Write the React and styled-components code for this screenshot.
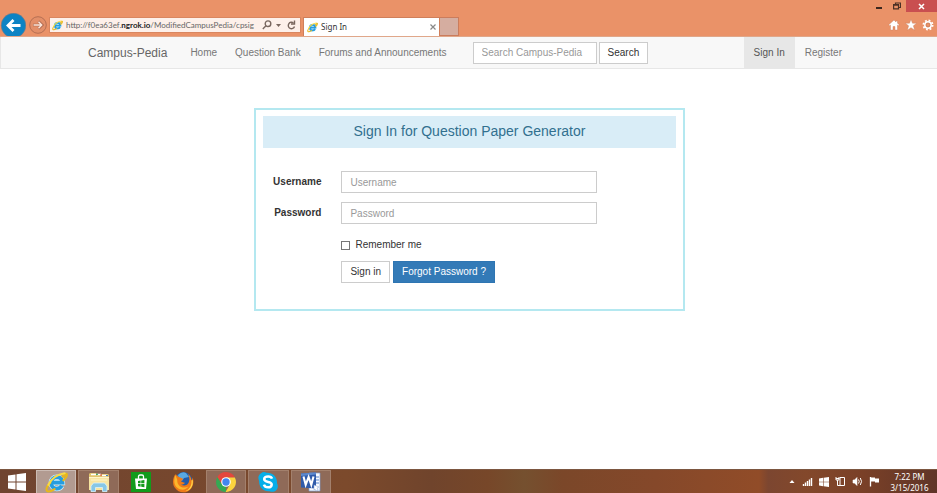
import React from "react";
import styled, { createGlobalStyle } from "styled-components";

const GlobalStyle = createGlobalStyle`
  * { box-sizing: border-box; }
  body { margin: 0; background: #fff; }
  button, input { font: inherit; margin: 0; }
`;

const Desktop = styled.div`
  min-height: 100vh;
  display: flex;
  flex-direction: column;
  color: #333;
  font: 10px/14px "Liberation Sans", Arial, sans-serif;
`;

/* Browser frame */
const BrowserBar = styled.header`
  height: 37px;
  display: flex;
  align-items: flex-end;
  background: #ea9268;
  border-bottom: 1px solid #e0a78a;
  font: 8px/12px "Noto Sans", "Open Sans", sans-serif;
`;
const IconButton = styled.button`
  display: flex;
  align-items: center;
  justify-content: center;
  flex: none;
  padding: 0;
  border: 0;
  background: none;
  svg { display: block; }
`;
const Forward = styled(IconButton)`
  margin: 0 0 2px 3px;
`;
const Address = styled.div`
  width: 252px;
  height: 16px;
  margin: 0 2px 3px 2px;
  padding: 0 4px 0 2px;
  display: flex;
  align-items: center;
  gap: 3px;
  background: #fdf0ea;
  border: 1px solid #d98660;
`;
const AddressActions = styled.div`
  display: flex;
  align-items: center;
  gap: 6px;
  padding-left: 1px;
`;
const Url = styled.span`
  flex: 1;
  white-space: nowrap;
  font-family: Lato, "Noto Sans", sans-serif;
  color: #666;
  b { font-weight: 700; color: #222; }
`;
const Tab = styled.div`
  width: 137px;
  height: 19px;
  padding: 0 3px;
  display: flex;
  align-items: center;
  gap: 3px;
  color: #333;
  background: #fff;
  border: 1px solid #cf7f5b;
  border-bottom: 0;
`;
const TabTitle = styled.span`
  flex: 1;
`;
const NewTab = styled.button`
  width: 19px;
  height: 19px;
  padding: 0;
  background: #d5ada0;
  border: 1px solid #cb7c5c;
  border-left: 0;
`;
const WindowSide = styled.div`
  align-self: stretch;
  margin-left: auto;
  display: flex;
  flex-direction: column;
  align-items: flex-end;
`;
const WindowControls = styled.div`
  display: flex;
  height: 12px;
`;
const WindowButton = styled(IconButton)`
  width: ${(p) => (p.$close ? 31 : 18)}px;
  background: ${(p) => (p.$close ? "#c94f50" : "none")};
`;
const BrowserTools = styled.div`
  display: flex;
  gap: 5px;
  padding: 7px 3px 0 0;
`;

/* Site navigation */
const Navbar = styled.nav`
  display: flex;
  height: 32px;
  padding: 0 85px 0 87px;
  background: #f8f8f8;
  border: 1px solid #e7e7e7;
  border-top: 0;
  border-right: 0;
  align-items: center;
`;
const Brand = styled.a`
  font-size: 12px;
  color: #666;
  text-decoration: none;
  margin-right: 14px;
`;
const NavLink = styled.a`
  display: flex;
  align-items: center;
  align-self: stretch;
  padding: 0 ${(p) => (p.$wide ? 10 : 9)}px;
  color: ${(p) => (p.$active ? "#555" : "#777")};
  background: ${(p) => (p.$active ? "#e7e7e7" : "transparent")};
  text-decoration: none;
  white-space: nowrap;
`;
const SearchForm = styled.form`
  display: flex;
  gap: 2px;
  margin: 0 auto 0 17px;
`;
const TextInput = styled.input`
  height: 22px;
  width: ${(p) => p.$width || "100%"};
  padding: 0 8px;
  color: #555;
  background: #fff;
  border: 1px solid #ccc;
  border-radius: 0;
  &::placeholder { color: #999; opacity: 1; }
`;
const Button = styled.button`
  height: 22px;
  padding: 0 8px;
  color: ${(p) => (p.$primary ? "#fff" : "#333")};
  background: ${(p) => (p.$primary ? "#337ab7" : "#fff")};
  border: 1px solid ${(p) => (p.$primary ? "#2e75b2" : "#ccc")};
  white-space: nowrap;
`;

/* Sign-in panel */
const Main = styled.main`
  flex: 1;
  padding: 39px 0 39px 2px;
`;
const Panel = styled.section`
  width: 46%;
  min-width: 400px;
  margin: 0 auto;
  padding: 6px 7px 26px;
  border: 2px solid #b4e8f0;
`;
const PanelTitle = styled.h1`
  margin: 0 0 23px;
  padding: 6px 0 8px;
  text-align: center;
  font-size: 14px;
  line-height: 18px;
  font-weight: 400;
  color: #31708f;
  background: #d9edf7;
`;
const LoginForm = styled.form`
  display: grid;
  grid-template-columns: 58px 62%;
  column-gap: 20px;
  row-gap: 9px;
  align-items: center;
`;
const FieldLabel = styled.label`
  font-weight: 700;
  text-align: right;
`;
const Remember = styled.label`
  grid-column: 2;
  display: flex;
  align-items: center;
  gap: 5px;
  padding-top: 5px;
`;
const Checkbox = styled.input`
  appearance: none;
  width: 9px;
  height: 9px;
  border: 1px solid #777;
  background: #fff;
  &:checked { background: #337ab7; }
`;
const Actions = styled.div`
  grid-column: 2;
  display: flex;
  gap: 3px;
`;

/* Taskbar */
const Taskbar = styled.footer`
  height: 24px;
  display: flex;
  align-items: stretch;
  gap: 2px;
  color: #fff;
  font: 8px/11px "Noto Sans", "Open Sans", sans-serif;
  border-top: 1px solid #7c5640;
  background: linear-gradient(
    90deg, #704430 0%, #7c4a2c 37%, #70442c 46%, #774729 52%, #75502f 56%, #7b4729 60%,
    #85482a 70%, #914c28 81%, #7c4630 82%, #83482b 86%, #7a4027 92%, #5f3528 100%
  );
`;
const StartButton = styled(IconButton)`
  width: 34px;
`;
const Tasks = styled.div`
  display: flex;
  gap: 2px;
  width: 295px;
`;
const Task = styled(IconButton)`
  flex: 1;
  min-width: 0;
  background: ${(p) => (p.$active ? "#b29b91" : p.$open ? "#8f6a58" : "transparent")};
  border: 1px solid ${(p) => (p.$active ? "#cbbbb3" : p.$open ? "#a3806c" : "transparent")};
  border-bottom: 0;
`;
const Tray = styled.div`
  margin-left: auto;
  display: flex;
  align-items: center;
  gap: 6px;
`;
const Clock = styled.time`
  width: 47px;
  margin: 0 4px 0 0;
  text-align: center;
  white-space: nowrap;
`;

const IELogo = ({ size }) => (
  <svg width={size} height={size} viewBox="0 0 24 24" fill="none" aria-hidden="true">
    <path d="M17.500 15.300a6 6 0 0 1-5.300 3.100c-3.400 0-5.700-2.500-5.700-6s2.400-6 5.900-6c3.400 0 5.600 2.200 5.800 5.700H8" stroke="#cdeefc" strokeWidth="5.400" />
    <path d="M17.500 15.300a6 6 0 0 1-5.300 3.100c-3.400 0-5.700-2.500-5.700-6s2.400-6 5.900-6c3.400 0 5.600 2.200 5.800 5.700H8" stroke="#269de0" strokeWidth="4" />
    <path d="M18.500 6C20.800 3.200 22.300 2.300 22.700 3.200c.5 1.500-1.200 4.300-3.500 6.500M5.500 12C2 16 .9 19.500 2.200 20.900c1.200 1.200 4.500 0 7.800-2.100" stroke="#e8b81a" strokeWidth="2.200" strokeLinecap="round" />
    <path d="M3.500 14.500C6.500 8.500 13 3.500 20.500 2.400" stroke="#fadb43" strokeWidth="2.200" strokeLinecap="round" />
  </svg>
);
const BackIcon = () => (
  <svg width="26" height="23" viewBox="0 0 26 23" aria-hidden="true">
    <circle cx="13.500" cy="12.500" r="12.300" fill="#0c83c4" stroke="#7b7a83" strokeWidth=".6" />
    <path d="M20.500 12.500H8M13.500 7L8 12.500l5.500 5.500" fill="none" stroke="#fff" strokeWidth="2.800" />
  </svg>
);
const ForwardIcon = () => (
  <svg width="18" height="18" viewBox="0 0 18 18" fill="none" aria-hidden="true">
    <circle cx="9" cy="9" r="8.300" stroke="#b56f53" fill="#e38f69" />
    <path d="M4 9h9M9.500 5.300L13.200 9l-3.700 3.700" stroke="#a9644a" strokeWidth="2.600" />
    <path d="M4.500 9h8M9.500 5.800L12.700 9l-3.200 3.200" stroke="#fde6da" strokeWidth="1.500" />
  </svg>
);
const SearchIcon = () => (
  <svg width="10" height="10" viewBox="0 0 10 10" fill="none" stroke="#79675f" strokeWidth="1.400" aria-hidden="true">
    <circle cx="6" cy="3.700" r="2.800" /><path d="M4 5.800L.8 9" />
  </svg>
);
const CaretIcon = () => (
  <svg width="5" height="3" viewBox="0 0 5 3" aria-hidden="true"><path d="M0 0h5L2.500 3z" fill="#79675f" /></svg>
);
const ReloadIcon = () => (
  <svg width="9" height="10" viewBox="0 0 9 10" fill="none" stroke="#79675f" strokeWidth="1.400" aria-hidden="true">
    <path d="M7.500 6.500A3.200 3.200 0 1 1 6.500 3" /><path d="M7.500.5v3.500H4" />
  </svg>
);
const TabCloseIcon = () => (
  <svg width="6" height="6" viewBox="0 0 6 6" stroke="#888" strokeWidth="1.200" aria-hidden="true"><path d="M.5.5l5 5M5.500.5l-5 5" /></svg>
);
const MinimizeIcon = () => (
  <svg width="8" height="8" viewBox="0 0 8 8" aria-hidden="true"><rect x="1" y="5" width="6" height="2" fill="#3c271e" /></svg>
);
const RestoreIcon = () => (
  <svg width="8" height="8" viewBox="0 0 8 8" fill="none" stroke="#4b3025" strokeWidth="1.200" aria-hidden="true">
    <path d="M2.500 2V1h5v4.500H6" /><path d="M.6 2.600h4.900v4.300H.6zM.6 3.200h4.900" />
  </svg>
);
const CloseIcon = () => (
  <svg width="7" height="7" viewBox="0 0 7 7" stroke="#fff" strokeWidth="1.500" aria-hidden="true"><path d="M1 1l5 5M6 1L1 6" /></svg>
);
const HomeIcon = () => (
  <svg width="12" height="12" viewBox="0 0 12 12" aria-hidden="true">
    <path d="M6 1L.8 5.700l1 1 .7-.6v4.900h2.500V7.500h2v3.500h2.500V6.100l.7.600 1-1-1.700-1.500V2H8v1z" fill="#fff" stroke="#c47c5c" strokeWidth=".4" />
  </svg>
);
const StarIcon = () => (
  <svg width="12" height="12" viewBox="0 0 12 12" aria-hidden="true">
    <path d="M6 .3l1.500 3.900h4.200L8.400 6.800l1.300 4.400L6 8.700l-3.700 2.500 1.300-4.400L.3 4.200h4.200z" fill="#fff" stroke="#c47c5c" strokeWidth=".4" />
  </svg>
);
const GearIcon = () => (
  <svg width="12" height="12" viewBox="0 0 12 12" fill="none" aria-hidden="true">
    <circle cx="6" cy="6" r="4.600" stroke="#fff" strokeWidth="1.800" strokeDasharray="1.800 1.813" />
    <circle cx="6" cy="6" r="3.100" stroke="#fff" strokeWidth="1.700" />
    <circle cx="6" cy="6" r="2.100" stroke="#a9674b" strokeWidth=".5" />
  </svg>
);
const WindowsIcon = ({ size }) => (
  <svg width={size} height={size} viewBox="0 0 18 18" fill="#fff" aria-hidden="true">
    <path d="M0 2.600L7.500 1.500v7H0zM8.500 1.300L18 0v8.500H8.500zM0 9.500h7.500v7L0 15.400zM8.500 9.500H18V18l-9.500-1.300z" />
  </svg>
);
const FolderIcon = () => (
  <svg width="24" height="22" viewBox="0 0 24 22" aria-hidden="true">
    <path d="M2 3l1-1h6l1 1h11l1 1v15H2z" fill="#e2c56d" />
    <path d="M4 3.500h5M10 3.500h4M15 4.500h5" stroke="#fff" strokeWidth="1.500" />
    <path d="M9 3.300h2" stroke="#23a45a" /><path d="M13 4h2" stroke="#d84938" /><path d="M19 4.500h2" stroke="#3e82c7" />
    <path d="M2 6h20v13H2z" fill="#f8e5a0" /><path d="M2 6.500h20M4 9h16" stroke="#fff5cb" />
    <path d="M4 20.500V15l2.500-3h11l2.500 3v5.500h-4.500v-4h-7v4z" fill="#87c7e6" stroke="#d8f3fe" strokeWidth=".8" />
  </svg>
);
const StoreIcon = () => (
  <svg width="20" height="20" viewBox="0 0 20 20" aria-hidden="true">
    <rect width="20" height="20" fill="#129b1b" />
    <path d="M7.500 7V4.500Q7.500 3 9 3h2q1.500 0 1.500 1.500V7" fill="none" stroke="#fff" strokeWidth="1.300" />
    <path d="M4 6.500h12L15 17H5z" fill="#fff" />
    <path d="M7 9l2.600-.4v2.700H7zM10.200 8.500l3.200-.4v3.200h-3.200zM7 12h2.600v2.700L7 14.300zM10.200 12h3.200v3.200l-3.200-.4z" fill="#129b1b" />
  </svg>
);
const FirefoxIcon = () => (
  <svg width="22" height="22" viewBox="0 0 22 22" aria-hidden="true">
    <circle cx="11.500" cy="10" r="9" fill="#235ba8" />
    <path d="M6 4q4-4 8-2l3 4-5 1-2 3-3-2z" fill="#58a8e1" />
    <path d="M3.500 3C.5 7 .2 13 2.700 16.500 5.500 21 11 22.500 15.500 20.500c5-2 7-8.500 5.200-14-.3 2-.8 2.500-1.200 3-.3-3-1.500-5-3.500-6.500 1.300 3 2 5.500.7 8.500-1.200 3-5 4-7.700 2 2 .2 3.300-.3 4-1.700-1.500.2-2.300-1.300-4-1.300 0-1.500 2-1.300 2-2.800L8.300 6.500C6.500 6.200 5.300 5 4.900 3.500L4 5z" fill="#ee7b19" />
    <path d="M3.500 4C1.500 9 2 14 5 16.500c4 3.500 9 2.500 11.500-1-3 1.700-7.500 1.500-9.700-1.500C4.500 11 6 9 4.500 7z" fill="#fcb72c" />
    <path d="M19.500 9.500c.5 5-2 9-6 10.500 5-.5 8-5 7.200-11z" fill="#ffd749" />
  </svg>
);
const ChromeIcon = () => (
  <svg width="20" height="20" viewBox="0 0 20 20" aria-hidden="true">
    <path d="M10 10v10A10 10 0 0 1 1.340 5z" fill="#35a853" />
    <path d="M1.340 5A10 10 0 0 1 18.850 5.400H10L6 12.300z" fill="#e4473c" />
    <path d="M18.850 5.400A10 10 0 0 1 9.600 20L14 12.300 10 5.400z" fill="#fbd43e" />
    <circle cx="10" cy="10" r="4.800" fill="#fff" /><circle cx="10" cy="10" r="3.700" fill="#4286f0" />
  </svg>
);
const SkypeIcon = () => (
  <svg width="20" height="20" viewBox="0 0 20 20" aria-hidden="true">
    <path d="M3 1.200c2-1.500 4-1.300 5.500-.4C14 .3 19.500 4.500 19 11.200c1.500 2.800.7 5.300-.8 7-2 1.800-4.300 2-6.600 1C6 20 .8 15.700 1.100 9 0 6-.2 3.700 3 1.200z" fill="#05aee8" />
    <path d="M14 6.700C13.500 5 12 4.500 10.100 4.500 8 4.500 6.200 5.300 6.200 7.100c0 4 7.500 1.900 7.500 5.300 0 2-1.600 2.900-3.600 2.900-2.300 0-3.600-.9-4.200-2.700" fill="none" stroke="#fff" strokeWidth="2.500" />
  </svg>
);
const WordIcon = () => (
  <svg width="20" height="20" viewBox="0 0 20 20" aria-hidden="true">
    <path d="M8 1h11v18H8z" fill="#f7faff" stroke="#7b9bcf" strokeWidth=".7" />
    <path d="M15 5h3M15 8h3M15 11h3" stroke="#5685cb" />
    <path d="M0 1.500L15 .5v16L0 15.500z" fill="#2f5baa" /><path d="M0 1.500L15 .5v2L0 4z" fill="#5c89ce" />
    <path d="M2.500 4.500l2.200 8.300L7.600 5l2.700 7.800 2.200-8.300" fill="none" stroke="#fff" strokeWidth="2.100" />
    <path d="M13 13l5 2-2 1 1 2-2 1-1-2-1 1z" fill="#fff" stroke="#8ba5cf" strokeWidth=".5" />
  </svg>
);
const TrayIcon = ({ width = 11, children }) => (
  <svg width={width} height="11" viewBox={`0 0 ${width} 11`} fill="none" stroke="#fff" aria-hidden="true">{children}</svg>
);

const tasks = [
  { name: "Internet Explorer", icon: <IELogo size={23} />, active: true },
  { name: "File Explorer", icon: <FolderIcon />, open: true },
  { name: "Store", icon: <StoreIcon /> },
  { name: "Firefox", icon: <FirefoxIcon /> },
  { name: "Chrome", icon: <ChromeIcon />, open: true },
  { name: "Skype", icon: <SkypeIcon />, open: true },
  { name: "Word", icon: <WordIcon />, open: true },
];

function Browser() {
  return (
    <BrowserBar>
      <IconButton aria-label="Back"><BackIcon /></IconButton>
      <Forward aria-label="Forward"><ForwardIcon /></Forward>
      <Address>
        <IELogo size={11} />
        <Url>http://f0ea63ef.<b>ngrok.io</b>/ModifiedCampusPedia/cpsig</Url>
        <IconButton aria-label="Search the web"><SearchIcon /></IconButton>
        <AddressActions>
          <IconButton aria-label="Show addresses"><CaretIcon /></IconButton>
          <IconButton aria-label="Reload"><ReloadIcon /></IconButton>
        </AddressActions>
      </Address>
      <Tab>
        <IELogo size={11} />
        <TabTitle>Sign In</TabTitle>
        <IconButton aria-label="Close tab"><TabCloseIcon /></IconButton>
      </Tab>
      <NewTab aria-label="New tab" />
      <WindowSide>
        <WindowControls>
          <WindowButton aria-label="Minimize"><MinimizeIcon /></WindowButton>
          <WindowButton aria-label="Restore"><RestoreIcon /></WindowButton>
          <WindowButton $close aria-label="Close"><CloseIcon /></WindowButton>
        </WindowControls>
        <BrowserTools>
          <IconButton aria-label="Home page"><HomeIcon /></IconButton>
          <IconButton aria-label="Favorites"><StarIcon /></IconButton>
          <IconButton aria-label="Settings"><GearIcon /></IconButton>
        </BrowserTools>
      </WindowSide>
    </BrowserBar>
  );
}

export default function App() {
  const stay = (e) => e.preventDefault();
  return (
    <Desktop>
      <GlobalStyle />
      <Browser />
      <Navbar>
        <Brand href="#">Campus-Pedia</Brand>
        <NavLink href="#">Home</NavLink>
        <NavLink href="#">Question Bank</NavLink>
        <NavLink href="#">Forums and Announcements</NavLink>
        <SearchForm onSubmit={stay}>
          <TextInput $width="124px" aria-label="Search Campus-Pedia" placeholder="Search Campus-Pedia" />
          <Button>Search</Button>
        </SearchForm>
        <NavLink href="#" $wide $active>Sign In</NavLink>
        <NavLink href="#" $wide>Register</NavLink>
      </Navbar>
      <Main>
        <Panel>
          <PanelTitle>Sign In for Question Paper Generator</PanelTitle>
          <LoginForm onSubmit={stay}>
            <FieldLabel htmlFor="username">Username</FieldLabel>
            <TextInput id="username" placeholder="Username" />
            <FieldLabel htmlFor="password">Password</FieldLabel>
            <TextInput id="password" type="password" placeholder="Password" />
            <Remember><Checkbox type="checkbox" />Remember me</Remember>
            <Actions>
              <Button>Sign in</Button>
              <Button type="button" $primary>Forgot Password ?</Button>
            </Actions>
          </LoginForm>
        </Panel>
      </Main>
      <Taskbar>
        <StartButton aria-label="Start"><WindowsIcon size={18} /></StartButton>
        <Tasks>
          {tasks.map((t) => (
            <Task key={t.name} aria-label={t.name} $active={t.active} $open={t.open}>{t.icon}</Task>
          ))}
        </Tasks>
        <Tray>
          <TrayIcon width={8}><path d="M1.500 7L4 4l2.500 3z" fill="#fff" stroke="none" /></TrayIcon>
          <TrayIcon><path d="M1.500 10V8M3.500 10V6.500M5.500 10V5M7.500 10V3.500M9.500 10V2" strokeWidth="1.400" /></TrayIcon>
          <WindowsIcon size={10} />
          <TrayIcon><path d="M5 1.500h4.500v8H5zM1 1v3h3V1M2.500 4v5.500H5M1 2.500h3" /></TrayIcon>
          <TrayIcon><path d="M1 4h1.500L5 1.500v8L2.500 7H1z" fill="#fff" strokeWidth=".6" /><path d="M6.500 3.500q1.500 2 0 4M8.300 2q2.500 3.500 0 7" /></TrayIcon>
          <TrayIcon><path d="M1.500 1v9.500" strokeWidth="1.300" /><path d="M2 1.500h4v1h4v4H6v-1H2z" fill="#fff" stroke="none" /></TrayIcon>
          <Clock>7:22 PM<br />3/15/2016</Clock>
        </Tray>
      </Taskbar>
    </Desktop>
  );
}
